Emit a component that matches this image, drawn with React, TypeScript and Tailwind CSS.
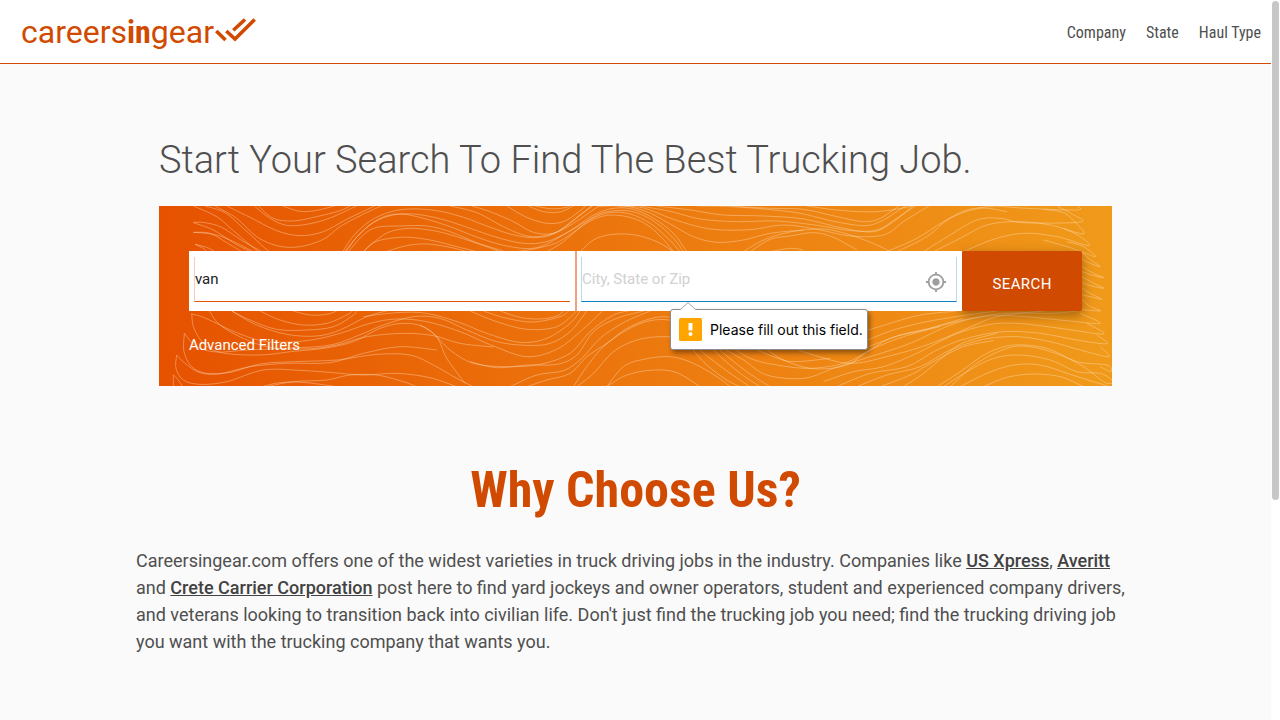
import { useState } from "react";

type Line = number[];

// Contour lines of the banner, as x, y pairs on a 2859 x 540 canvas that starts at 27, 18.
const contours: Line[] = [
  // upper left
  [130, 18, 200, 50, 250, 92, 300, 135, 325, 155],
  [165, 18, 225, 38, 280, 85, 340, 140, 358, 155],
  [195, 18, 260, 55, 320, 110, 385, 138, 450, 140, 520, 118, 570, 80, 635, 45, 700, 15],
  [230, 18, 300, 52, 380, 92, 450, 107, 520, 95, 590, 58, 680, 15],
  [313, 18, 360, 55, 410, 76, 470, 73, 540, 54, 625, 15],
  [325, 18, 370, 55, 430, 63, 500, 50, 570, 32, 605, 15],
  [398, 18, 450, 34, 500, 31, 560, 16],
  [130, 67, 165, 68, 215, 82, 270, 118, 335, 155],
  [130, 68, 190, 90, 250, 128, 300, 155],
  [130, 97, 190, 103, 240, 120, 310, 155],
  [130, 97, 180, 100, 230, 128, 275, 155],
  [135, 133, 170, 142, 195, 155],
  [135, 133, 160, 145, 170, 155],
  [578, 155, 610, 108, 660, 63, 720, 36, 780, 27, 860, 32, 940, 52, 1010, 78, 1080, 102, 1150, 113, 1210, 102, 1270, 60, 1330, 15],
  [584, 155, 620, 112, 670, 68, 730, 45, 800, 43, 880, 59, 960, 85, 1040, 112, 1120, 130, 1190, 125, 1260, 92, 1330, 45, 1390, 25, 1450, 28, 1510, 55, 1570, 100, 1610, 155],
  [588, 155, 630, 100, 690, 55, 750, 42, 820, 55, 900, 80, 990, 115, 1080, 140, 1160, 143, 1240, 105, 1320, 58, 1380, 38, 1440, 42, 1500, 70, 1550, 112, 1590, 155],
  [595, 155, 640, 105, 680, 82, 750, 78, 830, 78, 900, 95, 980, 128, 1060, 153],
  [640, 155, 680, 120, 720, 95, 780, 85, 850, 92, 920, 110, 1000, 137, 1050, 155],
  [640, 155, 670, 128, 720, 115, 780, 112, 850, 122, 920, 140, 980, 155],
  [708, 155, 770, 137, 830, 132, 900, 142, 950, 155],
  // upper middle
  [900, 18, 980, 38, 1060, 80, 1130, 108, 1190, 106, 1240, 85, 1290, 45, 1330, 15],
  [965, 18, 1020, 35, 1090, 65, 1150, 97, 1210, 100, 1270, 70, 1350, 15],
  [1070, 18, 1130, 52, 1190, 70, 1240, 65, 1280, 40, 1310, 15],
  [1135, 18, 1180, 35, 1230, 36, 1275, 15],
  [1155, 18, 1200, 26, 1240, 24, 1265, 15],
  [1100, 155, 1160, 145, 1220, 128, 1280, 90, 1340, 45, 1400, 32, 1460, 38, 1520, 70, 1570, 115, 1600, 155],
  [1190, 155, 1240, 125, 1300, 75, 1360, 48, 1420, 48, 1480, 68, 1530, 108, 1570, 155],
  [1290, 155, 1330, 120, 1380, 104, 1450, 104, 1520, 125, 1570, 155],
  [1345, 20, 1420, 18, 1490, 35, 1560, 72, 1630, 110, 1700, 127, 1780, 120, 1860, 100, 1960, 90],
  [1400, 18, 1480, 24, 1570, 58, 1680, 87, 1800, 89, 1900, 75, 2000, 88, 2100, 108, 2200, 105, 2260, 65, 2340, 15],
  [1470, 18, 1560, 34, 1650, 57, 1760, 65, 1880, 63, 2000, 76, 2100, 92, 2180, 90, 2240, 55, 2300, 15],
  [1520, 18, 1620, 30, 1720, 45, 1840, 48, 1960, 57, 2080, 85, 2170, 95, 2230, 65, 2290, 15],
  [1640, 18, 1740, 20, 1850, 28, 1950, 40, 2050, 64, 2140, 77, 2190, 65, 2240, 35, 2270, 15],
  [1740, 18, 1860, 25, 1960, 28, 2060, 50, 2140, 65, 2190, 55, 2250, 15],
  [1780, 155, 1830, 125, 1890, 103, 1960, 90, 2030, 88, 2110, 108, 2180, 135, 2220, 155],
  [1800, 155, 1860, 118, 1920, 108, 1990, 98, 2050, 112, 2120, 150],
  [1860, 155, 1920, 145, 1960, 150],
  // upper right
  [1970, 18, 2070, 31, 2180, 35, 2290, 18],
  [2210, 155, 2300, 115, 2380, 65, 2450, 30, 2540, 18],
  [2240, 155, 2330, 110, 2400, 55, 2490, 25, 2570, 35],
  [2320, 155, 2400, 105, 2480, 60, 2550, 55, 2620, 68, 2790, 66, 2765, 42, 2720, 18],
  [2350, 155, 2430, 115, 2510, 75, 2600, 65, 2700, 75, 2798, 102, 2780, 72, 2740, 38, 2680, 28],
  [2440, 155, 2530, 118, 2620, 100, 2720, 110, 2815, 137, 2790, 110, 2740, 85],
  [2540, 18, 2630, 25, 2780, 30, 2782, 18],
  [2680, 120, 2760, 143, 2835, 170, 2800, 140, 2750, 125],
  [2796, 155, 2815, 175, 2850, 200, 2820, 190, 2796, 178],
  [2796, 200, 2830, 220, 2860, 233, 2825, 225, 2796, 215],
  [2796, 230, 2830, 250, 2862, 265, 2825, 258, 2796, 248],
  [2796, 265, 2820, 280, 2855, 298, 2820, 290, 2796, 285],
  [2796, 298, 2820, 320, 2850, 333, 2760, 327, 2660, 335, 2540, 350, 2440, 390, 2330, 435, 2210, 470, 2100, 490, 1990, 465, 1920, 440],
  // lower left
  [125, 340, 132, 385, 165, 435, 220, 459, 330, 465, 430, 454, 520, 445, 610, 425, 690, 385, 760, 370, 830, 385, 900, 450, 970, 490, 1070, 500, 1170, 493, 1260, 460, 1320, 395, 1390, 345, 1450, 330],
  [125, 342, 155, 350, 200, 370, 260, 398, 350, 425, 470, 422, 570, 400, 660, 370, 740, 357, 830, 365, 930, 395, 1030, 438, 1130, 470, 1220, 448, 1290, 395, 1360, 330],
  [178, 333, 210, 375, 280, 415, 360, 442, 470, 447, 560, 435, 650, 410, 760, 400, 850, 407, 930, 430, 1030, 441],
  [245, 333, 300, 360, 380, 388, 470, 390, 550, 380, 610, 345, 620, 330],
  [245, 333, 320, 375, 410, 403, 500, 408, 570, 390, 650, 350, 720, 330],
  [330, 333, 390, 360, 460, 375, 530, 370, 590, 345, 610, 330],
  [430, 333, 480, 345, 530, 343, 560, 333],
  [103, 400, 102, 455, 125, 500, 170, 520, 240, 517, 330, 492, 430, 485, 560, 480, 680, 463, 780, 465, 850, 495, 920, 535, 970, 560],
  [103, 400, 140, 440, 200, 456, 290, 450, 400, 445, 540, 435, 640, 400, 700, 375, 790, 350, 870, 355, 950, 390, 1040, 425, 1130, 436, 1200, 430, 1260, 395, 1310, 333],
  [80, 465, 78, 505, 100, 540, 150, 553, 230, 545, 340, 510, 450, 511, 550, 518, 640, 525, 740, 520, 840, 533, 920, 560],
  [80, 465, 105, 490, 150, 518, 210, 521, 300, 500, 410, 490, 540, 488, 640, 460, 750, 440, 860, 450],
  [70, 525, 70, 560],
  [70, 525, 85, 540, 98, 560],
  [335, 560, 390, 548, 460, 547, 560, 560],
  [350, 560, 430, 545, 530, 540, 600, 525, 680, 525, 760, 545, 800, 560],
  [640, 350, 740, 338, 830, 340, 930, 368, 1010, 400, 1110, 427, 1190, 415, 1260, 370, 1290, 333],
  [810, 375, 860, 410, 890, 475, 945, 550],
  // lower middle
  [960, 333, 1040, 365, 1130, 388, 1220, 380, 1280, 333],
  [1000, 333, 1070, 355, 1150, 366, 1230, 350, 1255, 333],
  [1050, 333, 1110, 352, 1170, 357, 1220, 348, 1240, 333],
  [960, 485, 1040, 503, 1130, 495, 1220, 493, 1280, 465, 1330, 395, 1400, 355, 1480, 333],
  [1080, 560, 1160, 525, 1240, 512, 1295, 475, 1350, 415, 1420, 368, 1500, 333],
  [1130, 560, 1190, 540, 1260, 520, 1310, 470, 1370, 430, 1440, 380, 1540, 350, 1640, 380, 1710, 450, 1790, 515, 1860, 560],
  [1270, 560, 1310, 500, 1360, 440, 1430, 390, 1500, 362, 1570, 363, 1640, 400, 1700, 460, 1770, 520, 1830, 560],
  [1280, 560, 1330, 520, 1390, 455, 1460, 420, 1540, 410, 1610, 422, 1680, 475, 1740, 520, 1800, 560],
  [1370, 560, 1420, 500, 1480, 478, 1560, 470, 1630, 490, 1700, 530, 1740, 560],
  [1370, 560, 1430, 525, 1510, 510, 1580, 518, 1650, 560],
  [1620, 440, 1670, 495, 1730, 540, 1770, 560],
  [1710, 440, 1780, 480, 1850, 525, 1960, 535, 2050, 505, 2160, 470, 2280, 430, 2400, 375, 2500, 350, 2600, 348, 2750, 362, 2850, 370, 2790, 340],
  [1730, 430, 1800, 475, 1880, 495, 1980, 505, 2080, 490, 2140, 462, 2220, 415, 2320, 390, 2440, 355],
  [1800, 440, 1870, 470, 1930, 485, 2040, 475],
  [1840, 440, 1900, 480, 1990, 506, 2090, 495, 2160, 450, 2260, 410, 2370, 380],
  // lower right
  [2140, 395, 2220, 370, 2310, 345, 2420, 333],
  [2140, 425, 2230, 390, 2330, 365, 2450, 345, 2540, 333],
  [2155, 440, 2250, 405, 2340, 385, 2440, 360, 2560, 340, 2700, 340, 2780, 333],
  [2020, 545, 2110, 515, 2200, 500, 2300, 460, 2410, 405, 2510, 375, 2600, 370, 2730, 385, 2860, 402, 2810, 370],
  [2060, 560, 2160, 520, 2270, 500, 2360, 450, 2450, 415, 2560, 395, 2670, 400, 2780, 420, 2870, 431, 2840, 405],
  [2120, 560, 2210, 525, 2310, 500, 2400, 450, 2500, 418, 2600, 410, 2700, 425, 2790, 450, 2875, 470, 2850, 440],
  [2190, 560, 2280, 525, 2350, 485, 2440, 440, 2530, 422],
  [2260, 560, 2320, 520, 2380, 470, 2440, 428, 2540, 400],
  [2360, 560, 2430, 515, 2510, 460, 2590, 435, 2690, 445, 2780, 485, 2870, 495, 2882, 515, 2850, 500],
  [2380, 560, 2450, 515, 2530, 475, 2610, 465, 2700, 480, 2780, 515, 2850, 520, 2886, 540],
  [2430, 560, 2510, 520, 2590, 495, 2670, 495, 2760, 523, 2830, 545, 2880, 560],
  [2500, 560, 2570, 532, 2650, 522, 2730, 530, 2800, 560],
  [2400, 560, 2480, 490, 2570, 445, 2640, 440, 2730, 465, 2800, 500, 2860, 545, 2886, 550],
];

function toPath(line: Line): string {
  const points: [number, number][] = [];
  for (let i = 0; i < line.length; i += 2) points.push([line[i], line[i + 1]]);
  let d = `M${points[0][0]} ${points[0][1]}`;
  for (let i = 0; i < points.length - 1; i++) {
    const before = points[Math.max(i - 1, 0)];
    const from = points[i];
    const to = points[i + 1];
    const after = points[Math.min(i + 2, points.length - 1)];
    d += `C${from[0] + (to[0] - before[0]) / 6} ${from[1] + (to[1] - before[1]) / 6} ${to[0] - (after[0] - from[0]) / 6} ${to[1] - (after[1] - from[1]) / 6} ${to[0]} ${to[1]}`;
  }
  return d;
}

function Contours() {
  return (
    <svg
      aria-hidden="true"
      className="absolute inset-0 h-full w-full"
      viewBox="27 18 2859 540"
      preserveAspectRatio="xMidYMid slice"
      fill="none"
      stroke="#ffe9cf"
      strokeOpacity="0.7"
      strokeWidth="1.6"
    >
      {contours.map((line, i) => (
        <path key={i} d={toPath(line)} />
      ))}
    </svg>
  );
}

function Logo() {
  return (
    <a href="#home" className="flex items-center text-[32px] leading-8 text-[#d04a02]">
      <span>
        careers<b className="font-['Roboto_Condensed','Liberation_Sans_Narrow',sans-serif] font-bold">in</b>gear
      </span>
      <svg aria-hidden="true" className="mb-1 ml-px" width="41" height="24" viewBox="0 0 41 24" fill="none" stroke="currentColor" strokeWidth="3.6">
        <path d="M1.300 13 10.500 22M11.300 13 20 21 39.700 1.500M18.300 12.300 30 1.500" />
      </svg>
    </a>
  );
}

function ValidationBubble() {
  return (
    <div role="alert" className="absolute top-[58px] left-[93px] z-10 flex h-[41px] w-[198px] items-center gap-2 rounded-[3px] border border-[#8c8c8c] bg-white pl-2 text-black shadow-[2px_3px_5px_rgba(0,0,0,0.4)]">
      <svg aria-hidden="true" className="absolute -top-2 left-2" width="18" height="9" viewBox="0 0 18 9">
        <path d="M0 9 1 8 9 0.500 17 8 18 9Z" fill="#fff" />
        <path d="M1 8 9 0.500 17 8" fill="none" stroke="#a6a6a6" />
      </svg>
      <svg aria-hidden="true" width="23" height="23" viewBox="0 0 23 23">
        <rect width="23" height="23" rx="1.500" fill="#ffa400" />
        <path d="M9.500 5h4v7.500h-4z" fill="#fff" />
        <circle cx="11.500" cy="16" r="2" fill="#fff" />
      </svg>
      <span className="font-['Inter',sans-serif] text-sm leading-5 whitespace-nowrap">Please fill out this field.</span>
    </div>
  );
}

const navItems = ["Company", "State", "Haul Type"];

export default function App() {
  const [keyword, setKeyword] = useState("van");
  const [place, setPlace] = useState("");

  return (
    <div className="flex h-screen overflow-hidden bg-[#fafafa] font-['Roboto',sans-serif] text-[#4f4f4f]">
      <div className="min-w-0 flex-1">
        <header className="flex h-16 items-center justify-between border-b border-[#d04a02] bg-white pr-[10px] pl-[21px]">
          <Logo />
          <nav className="flex gap-5 pt-0.5 font-['Roboto_Condensed','Liberation_Sans_Narrow',sans-serif] text-base">
            {navItems.map((item) => (
              <a key={item} href="#nav">
                {item}
              </a>
            ))}
          </nav>
        </header>

        <main>
          <section className="mx-auto w-3/4 pt-[72px]">
            <h1 className="text-[38px] leading-[48px] font-light">Start Your Search To Find The Best Trucking Job.</h1>
            <div className="relative mt-[22px] h-[180px] bg-linear-to-r from-[#e65100] to-[#f09a1a] px-[30px] pt-[45px]">
              <Contours />
              <form className="relative flex h-[60px]" onSubmit={(event) => event.preventDefault()}>
                <div className="relative z-10 min-w-0 flex-1 border-r-2 border-[#f4a07c] bg-white px-[5px] pt-[6px] pb-[9px]">
                  <input
                    aria-label="Keyword"
                    className="h-full w-full border-b border-l border-b-[#e65100] border-l-[#f8cdbb] text-[15px] text-[#212121] outline-none"
                    value={keyword}
                    onChange={(event) => setKeyword(event.target.value)}
                  />
                </div>
                <div className="relative z-10 min-w-0 flex-1 bg-white pt-[6px] pr-[5px] pb-[9px] pl-1">
                  <input
                    aria-label="City, State or Zip"
                    placeholder="City, State or Zip"
                    className="h-full w-full border-x border-b border-x-[#b9dcea] border-b-[#0b84c4] text-[15px] outline-none placeholder:text-[#d1d1d1]"
                    value={place}
                    onChange={(event) => setPlace(event.target.value)}
                  />
                  <button type="button" aria-label="Use my location" className="absolute top-5 right-[15px] text-[#9e9e9e]">
                    <svg aria-hidden="true" width="22" height="22" viewBox="0 0 24 24" fill="currentColor">
                      <path d="M12 8c-2.210 0-4 1.790-4 4s1.790 4 4 4 4-1.790 4-4-1.790-4-4-4zm8.940 3A8.994 8.994 0 0 0 13 3.060V1h-2v2.060A8.994 8.994 0 0 0 3.060 11H1v2h2.060A8.994 8.994 0 0 0 11 20.940V23h2v-2.060A8.994 8.994 0 0 0 20.940 13H23v-2h-2.060zM12 19c-3.870 0-7-3.130-7-7s3.130-7 7-7 7 3.130 7 7-3.130 7-7 7z" />
                    </svg>
                  </button>
                  <ValidationBubble />
                </div>
                <button type="submit" className="w-[120px] rounded-xs bg-[#d04a02] pt-[6px] text-[15px] tracking-wide text-white shadow-[0_4px_12px_rgba(80,40,0,0.5)]">
                  SEARCH
                </button>
              </form>
              <a href="#filters" className="relative mt-6 inline-block text-[15px] leading-5 text-white">
                Advanced Filters
              </a>
            </div>
          </section>

          <section className="mx-auto w-[78.6%] pt-[72px]">
            <h2 className="text-center font-['Roboto_Condensed','Liberation_Sans_Narrow',sans-serif] text-[50px] leading-[64px] font-bold text-[#d04a02]">
              Why Choose Us?
            </h2>
            <p className="mt-[25px] text-lg leading-[27px]">
              Careersingear.com offers one of the widest varieties in truck driving jobs in the industry. Companies like{" "}
              <a href="#us-xpress" className="font-medium text-[#424242] underline">US Xpress</a>,{" "}
              <a href="#averitt" className="font-medium text-[#424242] underline">Averitt</a> and{" "}
              <a href="#crete" className="font-medium text-[#424242] underline">Crete Carrier Corporation</a> post here to find yard
              jockeys and owner operators, student and experienced company drivers, and veterans looking to transition back into
              civilian life. Don't just find the trucking job you need; find the trucking driving job you want with the trucking
              company that wants you.
            </p>
          </section>
        </main>
      </div>
      <div aria-hidden="true" className="w-[9px] bg-white px-px pt-px">
        <div className="h-[499px] rounded-full bg-[#c7c7c7]" />
      </div>
    </div>
  );
}
